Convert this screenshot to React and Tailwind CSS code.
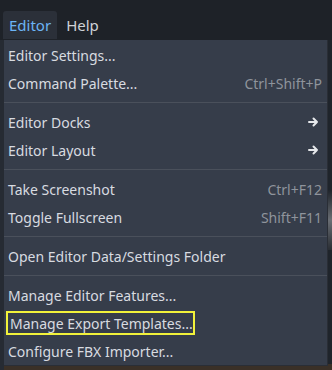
import React from 'react';

const Arrow = () => (
    <svg width="11" height="10" viewBox="0 0 11 10" className="text-[#e6e8eb]">
        <path d="M1 5h8M5.5 1.5 9 5 5.5 8.5" fill="none" stroke="currentColor" strokeWidth="2" strokeLinecap="round" strokeLinejoin="round" />
    </svg>
);

const items = [
    { label: 'Editor Settings...' },
    { label: 'Command Palette...', shortcut: 'Ctrl+Shift+P' },
    { sep: true },
    { label: 'Editor Docks', submenu: true },
    { label: 'Editor Layout', submenu: true },
    { sep: true },
    { label: 'Take Screenshot', shortcut: 'Ctrl+F12' },
    { label: 'Toggle Fullscreen', shortcut: 'Shift+F11' },
    { sep: true },
    { label: 'Open Editor Data/Settings Folder' },
    { sep: true },
    { label: 'Manage Editor Features...' },
    { label: 'Manage Export Templates...', highlight: true },
    { label: 'Configure FBX Importer...' },
];

const MenuItem = ({ item }) => {
    if (item.sep) {
        return (
            <div className="h-[11px] flex items-center">
                <div className="h-px w-full bg-[#4a505b]" />
            </div>
        );
    }
    return (
        <div className="h-[28px] flex items-center justify-between pl-[4px] pr-[5px]">
            <span
                className={
                    item.highlight
                        ? 'relative -ml-[2px] pl-[2px] pr-0 h-[24px] flex items-center border-2 border-[#f2f23a]'
                        : 'flex items-center'
                }
            >
                {item.label}
            </span>
            {item.shortcut && <span className="text-[#8f949c]">{item.shortcut}</span>}
            {item.submenu && (
                <span className="pr-[3px] flex items-center">
                    <Arrow />
                </span>
            )}
        </div>
    );
};

export default function App() {
    return (
        <div
            className="w-[332px] h-[370px] overflow-hidden bg-[#1e2228] flex flex-col text-[14px] text-[#d8dbe0]"
            style={{ fontFamily: '"Noto Sans", sans-serif' }}
        >
            {/* top menu bar */}
            <div className="h-[40px] flex items-end pl-[3px] gap-[2px] shrink-0">
                <div className="h-[28px] mb-[1px] px-[6px] rounded-t-[3px] bg-[#2b3039] flex items-center text-[15px] text-[#6cb4f5]">
                    Editor
                </div>
                <div className="h-[28px] mb-[1px] px-[7px] flex items-center text-[15px] text-[#cfd2d7]">
                    Help
                </div>
            </div>

            <div className="flex flex-1 min-h-0">
                <div className="w-[4px] bg-[#262b33]" />
                {/* dropdown */}
                <div className="flex flex-col">
                    <div className="w-[324px] h-[326px] bg-[#363d4a] border-r border-b border-[#2a2e36] flex flex-col">
                        <div className="h-px" />
                        {items.map((item, i) => (
                            <MenuItem key={i} item={item} />
                        ))}
                    </div>
                    <div className="flex-1 bg-[#3a3027]" />
                </div>
                <div className="flex-1 flex flex-col bg-[#1f242b]">
                    <div className="h-[150px]" />
                    <div className="h-[60px] bg-gradient-to-b from-[#1f242b] via-[#6a6e74] to-[#2a2e34]" />
                    <div className="flex-1" />
                    <div className="h-[6px] bg-[#3a3027]" />
                </div>
            </div>
        </div>
    );
}
